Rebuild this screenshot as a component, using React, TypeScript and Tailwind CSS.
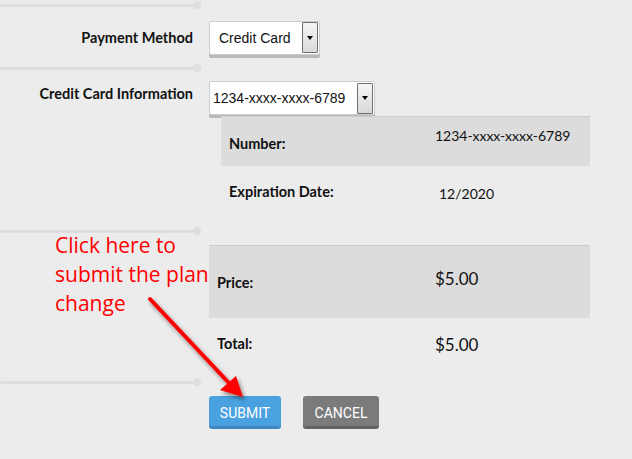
function Divider({ className = '' }: { className?: string }) {
    return (
        <div className={`flex items-center w-[201px] h-[8px] ${className}`}>
            <div className="flex-1 h-[3px] bg-[#dedede] rounded-l-full" />
            <div className="w-[8px] h-[8px] rounded-full bg-[#dedede] -ml-[4px]" />
        </div>
    )
}

function Select({ value, className }: { value: string; className: string }) {
    return (
        <div className={`h-[34px] bg-white border border-[#cdcdcd] rounded-[2px] shadow-[0_3px_0_#b8b8b8] flex items-center justify-between pr-[1px] font-['Liberation_Sans',sans-serif] text-[14px] text-[#111] ${className}`}>
            <span className="pt-[1px]">{value}</span>
            <div className="w-[16px] h-[31px] border border-[#6f6f6f] rounded-[1px] bg-gradient-to-b from-[#f6f6f6] to-[#d9d9d9] flex items-center justify-center">
                <div className="w-0 h-0 border-l-[3px] border-r-[3px] border-t-[4px] border-l-transparent border-r-transparent border-t-black" />
            </div>
        </div>
    )
}

export default function App() {
    const label = "font-['Lato',sans-serif] font-bold text-[14.5px] text-[#111] leading-[16px]"
    const value = "font-['Lato',sans-serif] text-[#111]"

    return (
        <div className="relative w-[632px] h-[459px] overflow-hidden bg-[#ececec]">
            <Divider className="mt-[1px]" />

            {/* Payment method */}
            <div className="flex items-center mt-[10px] h-[37px]">
                <div className={`w-[193px] text-right ${label}`}>Payment Method</div>
                <div className="ml-[16px]">
                    <Select value="Credit Card" className="w-[111px] pl-[9px]" />
                </div>
            </div>

            <Divider className="mt-[8px]" />

            {/* Credit card info */}
            <div className="flex items-start mt-[9px]">
                <div className={`w-[193px] text-right pt-[5px] ${label}`}>Credit Card Information</div>
                <div className="ml-[16px] flex flex-col">
                    <Select value="1234-xxxx-xxxx-6789" className="w-[166px] pl-[3px]" />
                    <div className="ml-[12px] w-[369px] mt-[1px]">
                        <div className="flex h-[50px] bg-[#dcdcdc] border-t border-[#cfcfcf]">
                            <div className={`w-[214px] pl-[8px] pt-[19px] ${label}`}>Number:</div>
                            <div className={`pt-[10px] text-[14px] leading-[18px] ${value}`}>1234-xxxx-xxxx-6789</div>
                        </div>
                        <div className="flex h-[60px]">
                            <div className={`w-[214px] pl-[8px] pt-[18px] ${label}`}>Expiration Date:</div>
                            <div className={`pl-[4px] pt-[19px] text-[14px] leading-[18px] ${value}`}>12/2020</div>
                        </div>
                    </div>
                </div>
            </div>

            <Divider className="mt-[1px]" />

            {/* Price table */}
            <div className="ml-[209px] mt-[10px] w-[381px]">
                <div className="flex h-[73px] bg-[#dcdcdc] border-t border-[#cccccc]">
                    <div className={`w-[226px] pl-[8px] pt-[29px] ${label}`}>Price:</div>
                    <div className={`pt-[22px] text-[17px] leading-[22px] ${value}`}>$5.00</div>
                </div>
                <div className="flex h-[52px]">
                    <div className={`w-[226px] pl-[8px] pt-[18px] ${label}`}>Total:</div>
                    <div className={`pt-[16px] text-[17px] leading-[22px] ${value}`}>$5.00</div>
                </div>
            </div>

            <Divider className="mt-[8px]" />

            {/* Buttons */}
            <div className="flex gap-[22px] ml-[209px] mt-[10px] font-['Roboto',sans-serif] text-[14px] text-white">
                <button className="w-[72px] h-[33px] rounded-[3px] bg-[#4aa1e0] border-b-[3px] border-[#3d87c4] pt-[4px]">SUBMIT</button>
                <button className="w-[76px] h-[33px] rounded-[3px] bg-[#7b7b7b] border-b-[3px] border-[#626262] pt-[4px]">CANCEL</button>
            </div>

            {/* Annotation */}
            <div className="absolute left-[55px] top-[231px] font-['Open_Sans',sans-serif] text-[21px] leading-[29px] text-[#ff0000]">
                <div>Click here to</div>
                <div>submit the plan</div>
                <div>change</div>
            </div>
            <svg className="absolute left-0 top-0 pointer-events-none" width="632" height="459">
                <defs>
                    <filter id="sh" x="-20%" y="-20%" width="140%" height="140%">
                        <feDropShadow dx="2" dy="3" stdDeviation="2" floodColor="#000" floodOpacity="0.45" />
                    </filter>
                </defs>
                <g filter="url(#sh)">
                    <line x1="150" y1="299" x2="229" y2="383" stroke="#ff0000" strokeWidth="4" strokeLinecap="round" />
                    <polygon points="243,397 220,390 236,376" fill="#ff0000" />
                </g>
            </svg>
        </div>
    )
}
